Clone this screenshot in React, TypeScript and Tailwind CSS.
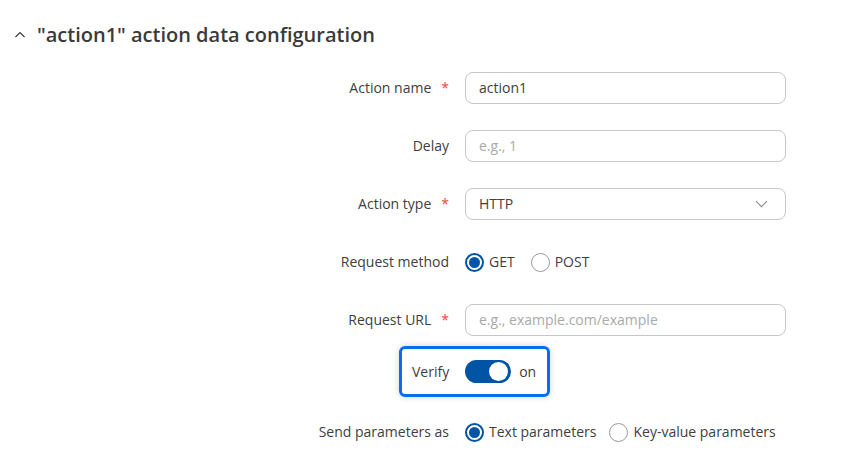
import { useState } from 'react';

function Label({ text, required }: { text: string; required?: boolean }) {
    return (
        <div className="w-[449px] shrink-0 flex justify-end items-center text-[14px] text-[#404040] pb-[1px]">
            <span>{text}</span>
            {required && <span className="ml-[10px] text-[#e5483d]">*</span>}
        </div>
    );
}

function Radio({ checked, label }: { checked?: boolean; label: string }) {
    return (
        <label className="flex items-center gap-[5px] text-[14px] text-[#404040]">
            <span
                className={`w-[19px] h-[19px] rounded-full border flex items-center justify-center ${
                    checked ? 'border-[#0054a6] border-2' : 'border-[#9a9a9a]'
                }`}
            >
                {checked && <span className="w-[11px] h-[11px] rounded-full bg-[#0054a6]" />}
            </span>
            <span className="pb-[1px]">{label}</span>
        </label>
    );
}

export default function App() {
    const [verify, setVerify] = useState(true);

    return (
        <div className="w-[859px] h-[469px] bg-white overflow-hidden" style={{ fontFamily: '"Open Sans", sans-serif' }}>
            <div className="flex items-center h-[26px] mt-[22px] pl-[14px] gap-[11px] text-[#3a3a3a]">
                <svg className="w-[12px] h-[12px]" viewBox="0 0 12 12" fill="none" stroke="currentColor" strokeWidth={1.2}>
                    <path d="M1.5 8L6 3.5 10.5 8" />
                </svg>
                <h2 className="text-[20px] font-semibold">"action1" action data configuration</h2>
            </div>

            <div className="flex flex-col mt-[24px]">
                <div className="flex items-center gap-4 h-8">
                    <Label text="Action name" required />
                    <input
                        defaultValue="action1"
                        className="w-[321px] h-8 px-[13px] pb-[1px] rounded-lg border border-[#c6c6c6] text-[14px] text-[#404040] outline-none"
                    />
                </div>

                <div className="flex items-center gap-4 h-8 mt-[26px]">
                    <Label text="Delay" />
                    <input
                        placeholder="e.g., 1"
                        className="w-[321px] h-8 px-[13px] pb-[1px] rounded-lg border border-[#c6c6c6] text-[14px] text-[#404040] placeholder:text-[#a9a9a9] outline-none"
                    />
                </div>

                <div className="flex items-center gap-4 h-8 mt-[26px]">
                    <Label text="Action type" required />
                    <div className="w-[321px] h-8 px-[13px] pb-[1px] rounded-lg border border-[#c6c6c6] flex items-center justify-between text-[14px] text-[#404040]">
                        <span>HTTP</span>
                        <svg className="w-[13px] h-[8px] mr-[4px] text-[#8a8a8a]" viewBox="0 0 13 8" fill="none" stroke="currentColor" strokeWidth={1.1}>
                            <path d="M1 1.2l5.5 5.5L12 1.2" />
                        </svg>
                    </div>
                </div>

                <div className="flex items-center gap-4 h-8 mt-[26px]">
                    <Label text="Request method" />
                    <div className="flex items-center gap-[16px]">
                        <Radio checked label="GET" />
                        <Radio label="POST" />
                    </div>
                </div>

                <div className="flex items-center gap-4 h-8 mt-[26px]">
                    <Label text="Request URL" required />
                    <input
                        placeholder="e.g., example.com/example"
                        className="w-[321px] h-8 px-[13px] pb-[1px] rounded-lg border border-[#c6c6c6] text-[14px] text-[#404040] placeholder:text-[#a9a9a9] outline-none"
                    />
                </div>

                <div className="flex mt-[10px] pl-[399px]">
                    <div className="flex items-center h-[51px] pl-[10px] pr-[11px] border-[3px] border-[#0a6cf5] rounded-[6px] shadow-[0_0_6px_rgba(0,0,0,0.18)] text-[14px] text-[#404040]">
                        <span className="pb-[1px]">Verify</span>
                        <button
                            onClick={() => setVerify(!verify)}
                            className={`ml-[16px] w-[46px] h-[23px] rounded-full flex items-center px-[3px] ${
                                verify ? 'bg-[#0054a6] justify-end' : 'bg-[#bdbdbd] justify-start'
                            }`}
                        >
                            <span className="w-[19px] h-[19px] rounded-full bg-white" />
                        </button>
                        <span className="ml-[8px] pb-[1px]">{verify ? 'on' : 'off'}</span>
                    </div>
                </div>

                <div className="flex items-center gap-4 h-8 mt-[19px]">
                    <Label text="Send parameters as" />
                    <div className="flex items-center gap-[13px]">
                        <Radio checked label="Text parameters" />
                        <Radio label="Key-value parameters" />
                    </div>
                </div>
            </div>
        </div>
    );
}
